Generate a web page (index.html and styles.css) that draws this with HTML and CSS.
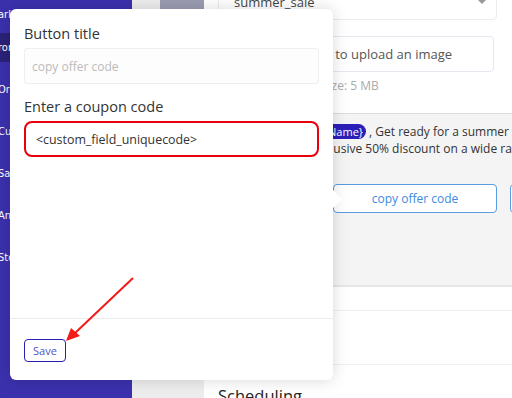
FILE: index.html
```html
<!DOCTYPE html>
<html>
<head>
  <title>Campaign editor</title>
  <meta charset="UTF-8" />
  <meta name="viewport" content="width=device-width, initial-scale=1.0"/>
  <link rel="stylesheet" href="styles.css">
</head>
<body>
  <div class="app">
    <aside class="sidebar">
      <div class="nav-item first">arketing</div>
      <div class="nav-item active">romotions</div>
      <div class="nav-item">Orders</div>
      <div class="nav-item">Customers</div>
      <div class="nav-item">Sales</div>
      <div class="nav-item">Analytics</div>
      <div class="nav-item">Store</div>
    </aside>

    <div class="strip">
      <div class="thumb"></div>
    </div>

    <main class="main">
      <div class="select-box">
        <span>summer_sale</span>
        <span class="caret"></span>
      </div>
      <div class="upload">Click to upload an image</div>
      <div class="hint">Max file size: 5 MB</div>

      <section class="preview">
        <p class="msg">
          <span class="line">Hello <span class="pill">{First Name}</span> , Get ready for a summer fun</span>
          <span class="line">Enjoy an exclusive 50% discount on a wide range</span>
        </p>
        <div class="btn-row">
          <button class="cta">copy offer code</button>
          <button class="cta">Shop now</button>
        </div>
      </section>

      <div class="row"></div>
      <div class="row tall"></div>
      <h3 class="section-title">Scheduling</h3>
    </main>
  </div>

  <div class="popover">
    <div class="pop-body">
      <label class="pop-label">Button title</label>
      <div class="pop-input placeholder">copy offer code</div>
      <label class="pop-label second">Enter a coupon code</label>
      <div class="pop-input highlight">&lt;custom_field_uniquecode&gt;</div>
    </div>
    <div class="pop-footer">
      <button class="save-btn">Save</button>
    </div>
  </div>

  <svg class="annot-arrow" width="512" height="398" viewBox="0 0 512 398">
    <line x1="133" y1="278" x2="74" y2="334" stroke="#f21a1a" stroke-width="2"/>
    <polygon points="66,341 71,328 80,336" fill="#f21a1a"/>
  </svg>
</body>
</html>
```

FILE: styles.css
```css
body {
  margin: 0;
  font-family: "Open Sans", "Liberation Sans", sans-serif;
  color: #333;
  overflow: hidden;
}
.app {
  display: flex;
  height: 398px;
}
.sidebar {
  width: 132px;
  background: #3b31ad;
  color: #fff;
  font-family: "DejaVu Sans Condensed", "DejaVu Sans", sans-serif;
  font-size: 11px;
  flex-shrink: 0;
}
.nav-item {
  height: 42px;
  line-height: 42px;
  white-space: nowrap;
  overflow: hidden;
  text-indent: -2px;
}
.nav-item.first {
  height: 30px;
  line-height: 30px;
  margin-bottom: 3px;
}
.nav-item.active {
  height: 29px;
  line-height: 29px;
  background: #2a2278;
  margin-bottom: 7px;
}
.strip {
  width: 72px;
  background: #ededed;
  flex-shrink: 0;
}
.thumb {
  height: 9px;
  margin-left: 28px;
  background: #9b9bb2;
}
.main {
  flex: 1;
  background: #fff;
  overflow: hidden;
}
.select-box {
  margin: -16px 15px 0 14px;
  height: 36px;
  border: 1px solid #ececec;
  border-radius: 4px;
  box-sizing: border-box;
  display: flex;
  align-items: center;
  justify-content: space-between;
  padding: 0 10px 0 15px;
  font-size: 13px;
  color: #444;
}
.caret {
  width: 0;
  height: 0;
  border-left: 4px solid transparent;
  border-right: 4px solid transparent;
  border-top: 4px solid #999;
}
.upload {
  margin: 16px 18px 0 14px;
  height: 36px;
  border: 1px solid #e6e8f0;
  border-radius: 4px;
  box-sizing: border-box;
  line-height: 34px;
  padding-left: 85px;
  font-size: 13px;
  color: #555;
  white-space: nowrap;
}
.hint {
  margin: 6px 0 0 72px;
  font-size: 12px;
  color: #aaa;
  height: 16px;
  line-height: 16px;
  white-space: nowrap;
}
.preview {
  margin-top: 19px;
  height: 174px;
  background: #f4f4f4;
  border-top: 1px solid #dcdcdc;
  border-bottom: 2px solid #e6e6e6;
  padding-top: 9px;
  box-sizing: border-box;
}
.msg {
  margin: 0 0 0 57px;
  font-size: 12px;
  line-height: 17px;
  color: #333;
}
.line {
  display: block;
  white-space: nowrap;
}
.pill {
  background: #2b1fb8;
  color: #fff;
  border-radius: 8px;
  padding: 0 3px 0 6px;
  font-size: 11px;
}
.btn-row {
  display: flex;
  gap: 13px;
  margin: 27px 0 0 129px;
}
.cta {
  flex-shrink: 0;
  width: 164px;
  height: 29px;
  border: 1px solid #5a9be6;
  border-radius: 4px;
  background: #fff;
  color: #3d8be0;
  font-family: inherit;
  font-size: 12px;
}
.row {
  height: 23px;
  border-bottom: 1px solid #f0f0f0;
}
.row.tall {
  height: 53px;
}
.section-title {
  margin: 19px 0 0 14px;
  font-size: 16.5px;
  font-weight: normal;
  color: #222;
}
.popover {
  position: absolute;
  left: 10px;
  top: 9px;
  width: 323px;
  height: 371px;
  background: #fff;
  border-radius: 6px;
  box-shadow: 0 0 16px rgba(0,0,0,0.16);
  display: flex;
  flex-direction: column;
}
.popover::after {
  content: "";
  position: absolute;
  right: -9px;
  top: 181px;
  border-top: 9px solid transparent;
  border-bottom: 9px solid transparent;
  border-left: 9px solid #fff;
}
.pop-body {
  flex: 1;
  padding: 15px 14px 0 14px;
  border-bottom: 1px solid #ececec;
}
.pop-label {
  display: block;
  font-size: 14.5px;
  line-height: 20px;
  color: #333;
}
.pop-label.second {
  margin-top: 13px;
}
.pop-input {
  margin-top: 4px;
  height: 36px;
  box-sizing: border-box;
  display: flex;
  align-items: center;
}
.pop-input.placeholder {
  border: 1px solid #efefef;
  background: #fdfdfd;
  border-radius: 3px;
  padding-left: 7px;
  font-size: 12px;
  color: #bbb;
}
.pop-input.highlight {
  border: 2px solid #e8000b;
  border-radius: 8px;
  padding-left: 10px;
  font-size: 12.4px;
  color: #333;
}
.pop-footer {
  height: 61px;
  padding: 19px 14px 0 14px;
  box-sizing: border-box;
}
.save-btn {
  width: 42px;
  height: 23px;
  border: 1px solid #2a20b0;
  border-radius: 4px;
  background: #fff;
  color: #5252c4;
  font-family: inherit;
  font-size: 11px;
  padding: 0;
}
.annot-arrow {
  position: absolute;
  left: 0;
  top: 0;
  pointer-events: none;
}
```
